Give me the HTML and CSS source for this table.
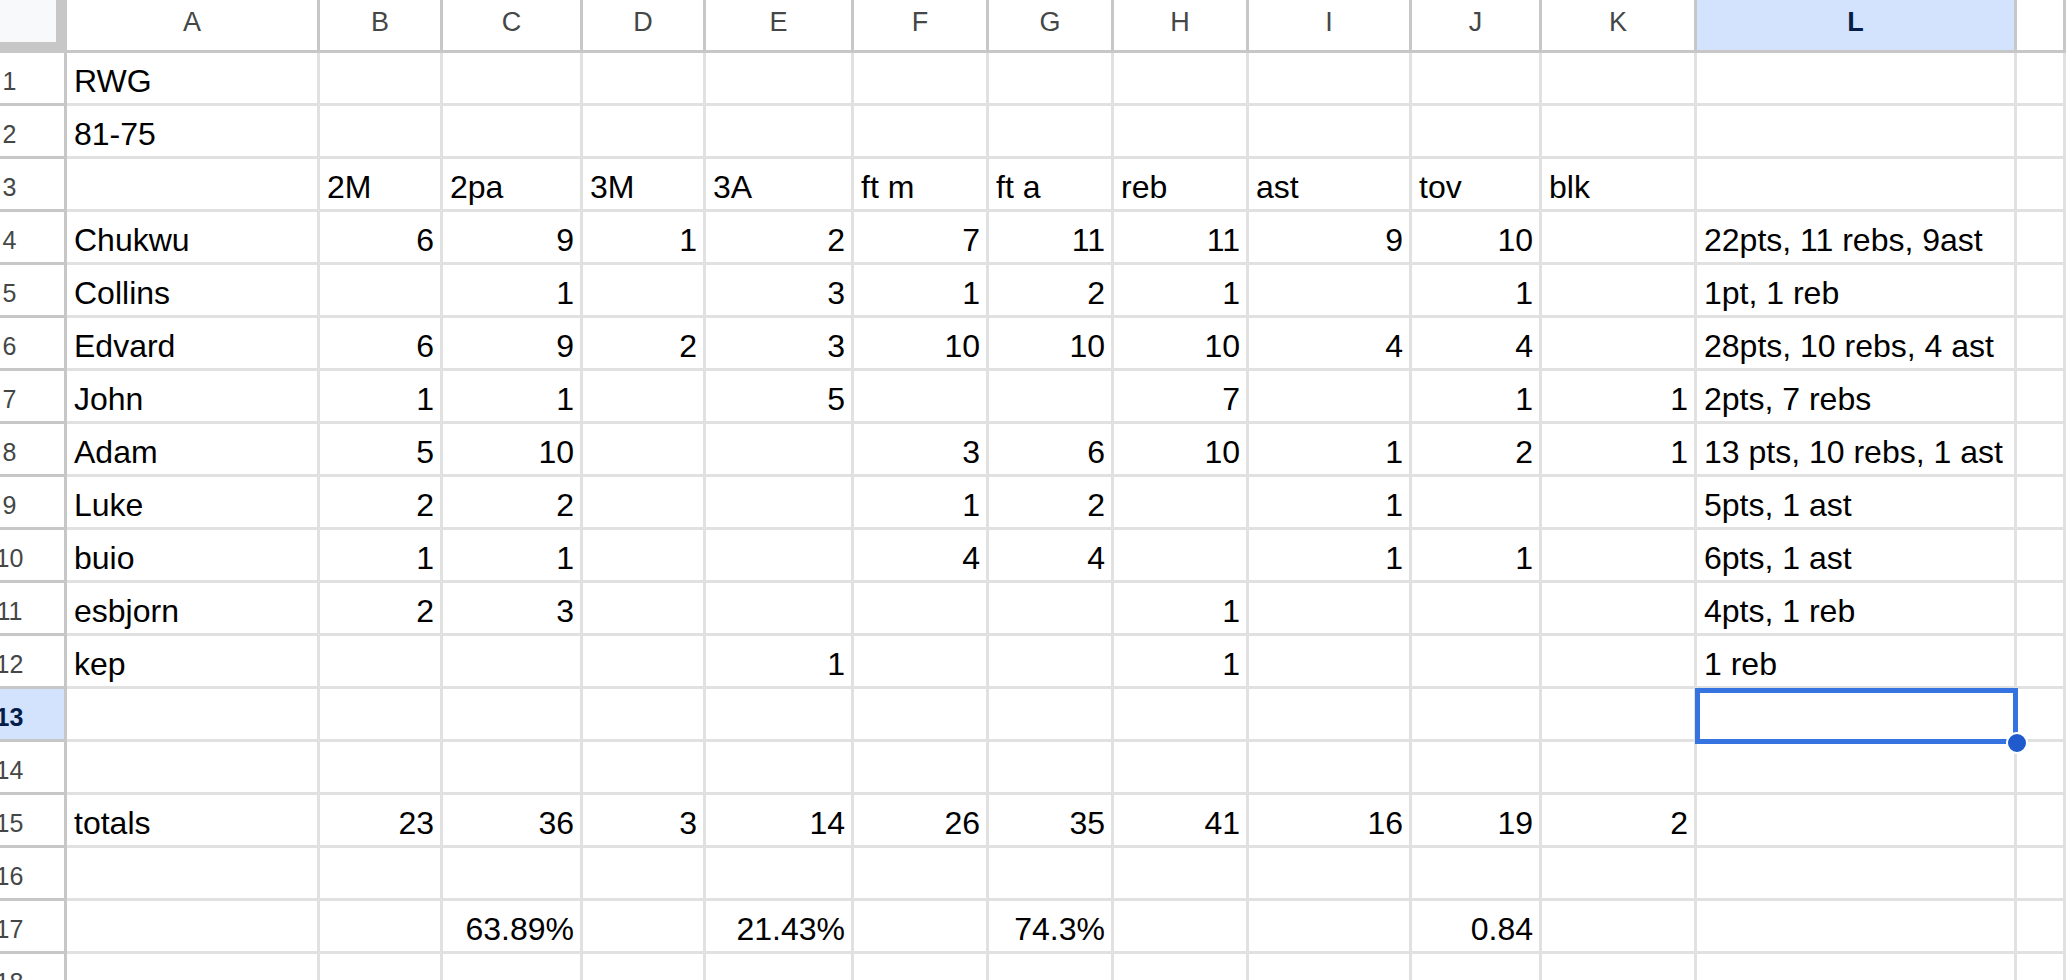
FILE: index.html
```html
<!DOCTYPE html>
<html>
<head>
<meta charset="utf-8">
<title>Sheet</title>
<link rel="stylesheet" href="styles.css">
</head>
<body>
<div class="sheet">
  <div class="corner"></div>
  <div class="ch">A</div><div class="ch">B</div><div class="ch">C</div><div class="ch">D</div><div class="ch">E</div><div class="ch">F</div><div class="ch">G</div><div class="ch">H</div><div class="ch">I</div><div class="ch">J</div><div class="ch">K</div><div class="ch active">L</div><div class="ch"></div>

  <div class="rh"><span>1</span></div><div class="c">RWG</div><div class="c"></div><div class="c"></div><div class="c"></div><div class="c"></div><div class="c"></div><div class="c"></div><div class="c"></div><div class="c"></div><div class="c"></div><div class="c"></div><div class="c"></div><div class="c"></div>

  <div class="rh"><span>2</span></div><div class="c">81-75</div><div class="c"></div><div class="c"></div><div class="c"></div><div class="c"></div><div class="c"></div><div class="c"></div><div class="c"></div><div class="c"></div><div class="c"></div><div class="c"></div><div class="c"></div><div class="c"></div>

  <div class="rh"><span>3</span></div><div class="c"></div><div class="c">2M</div><div class="c">2pa</div><div class="c">3M</div><div class="c">3A</div><div class="c">ft m</div><div class="c">ft a</div><div class="c">reb</div><div class="c">ast</div><div class="c">tov</div><div class="c">blk</div><div class="c"></div><div class="c"></div>

  <div class="rh"><span>4</span></div><div class="c">Chukwu</div><div class="c n">6</div><div class="c n">9</div><div class="c n">1</div><div class="c n">2</div><div class="c n">7</div><div class="c n">11</div><div class="c n">11</div><div class="c n">9</div><div class="c n">10</div><div class="c"></div><div class="c">22pts, 11 rebs, 9ast</div><div class="c"></div>

  <div class="rh"><span>5</span></div><div class="c">Collins</div><div class="c"></div><div class="c n">1</div><div class="c"></div><div class="c n">3</div><div class="c n">1</div><div class="c n">2</div><div class="c n">1</div><div class="c"></div><div class="c n">1</div><div class="c"></div><div class="c">1pt, 1 reb</div><div class="c"></div>

  <div class="rh"><span>6</span></div><div class="c">Edvard</div><div class="c n">6</div><div class="c n">9</div><div class="c n">2</div><div class="c n">3</div><div class="c n">10</div><div class="c n">10</div><div class="c n">10</div><div class="c n">4</div><div class="c n">4</div><div class="c"></div><div class="c">28pts, 10 rebs, 4 ast</div><div class="c"></div>

  <div class="rh"><span>7</span></div><div class="c">John</div><div class="c n">1</div><div class="c n">1</div><div class="c"></div><div class="c n">5</div><div class="c"></div><div class="c"></div><div class="c n">7</div><div class="c"></div><div class="c n">1</div><div class="c n">1</div><div class="c">2pts, 7 rebs</div><div class="c"></div>

  <div class="rh"><span>8</span></div><div class="c">Adam</div><div class="c n">5</div><div class="c n">10</div><div class="c"></div><div class="c"></div><div class="c n">3</div><div class="c n">6</div><div class="c n">10</div><div class="c n">1</div><div class="c n">2</div><div class="c n">1</div><div class="c">13 pts, 10 rebs, 1 ast</div><div class="c"></div>

  <div class="rh"><span>9</span></div><div class="c">Luke</div><div class="c n">2</div><div class="c n">2</div><div class="c"></div><div class="c"></div><div class="c n">1</div><div class="c n">2</div><div class="c"></div><div class="c n">1</div><div class="c"></div><div class="c"></div><div class="c">5pts, 1 ast</div><div class="c"></div>

  <div class="rh"><span>10</span></div><div class="c">buio</div><div class="c n">1</div><div class="c n">1</div><div class="c"></div><div class="c"></div><div class="c n">4</div><div class="c n">4</div><div class="c"></div><div class="c n">1</div><div class="c n">1</div><div class="c"></div><div class="c">6pts, 1 ast</div><div class="c"></div>

  <div class="rh"><span>11</span></div><div class="c">esbjorn</div><div class="c n">2</div><div class="c n">3</div><div class="c"></div><div class="c"></div><div class="c"></div><div class="c"></div><div class="c n">1</div><div class="c"></div><div class="c"></div><div class="c"></div><div class="c">4pts, 1 reb</div><div class="c"></div>

  <div class="rh"><span>12</span></div><div class="c">kep</div><div class="c"></div><div class="c"></div><div class="c"></div><div class="c n">1</div><div class="c"></div><div class="c"></div><div class="c n">1</div><div class="c"></div><div class="c"></div><div class="c"></div><div class="c">1 reb</div><div class="c"></div>

  <div class="rh active"><span>13</span></div><div class="c"></div><div class="c"></div><div class="c"></div><div class="c"></div><div class="c"></div><div class="c"></div><div class="c"></div><div class="c"></div><div class="c"></div><div class="c"></div><div class="c"></div><div class="c selcell"><div class="sel"></div><div class="handle"></div></div><div class="c"></div>

  <div class="rh"><span>14</span></div><div class="c"></div><div class="c"></div><div class="c"></div><div class="c"></div><div class="c"></div><div class="c"></div><div class="c"></div><div class="c"></div><div class="c"></div><div class="c"></div><div class="c"></div><div class="c"></div><div class="c"></div>

  <div class="rh"><span>15</span></div><div class="c">totals</div><div class="c n">23</div><div class="c n">36</div><div class="c n">3</div><div class="c n">14</div><div class="c n">26</div><div class="c n">35</div><div class="c n">41</div><div class="c n">16</div><div class="c n">19</div><div class="c n">2</div><div class="c"></div><div class="c"></div>

  <div class="rh"><span>16</span></div><div class="c"></div><div class="c"></div><div class="c"></div><div class="c"></div><div class="c"></div><div class="c"></div><div class="c"></div><div class="c"></div><div class="c"></div><div class="c"></div><div class="c"></div><div class="c"></div><div class="c"></div>

  <div class="rh"><span>17</span></div><div class="c"></div><div class="c"></div><div class="c n">63.89%</div><div class="c"></div><div class="c n">21.43%</div><div class="c"></div><div class="c n">74.3%</div><div class="c"></div><div class="c"></div><div class="c n">0.84</div><div class="c"></div><div class="c"></div><div class="c"></div>

  <div class="rh"><span>18</span></div><div class="c"></div><div class="c"></div><div class="c"></div><div class="c"></div><div class="c"></div><div class="c"></div><div class="c"></div><div class="c"></div><div class="c"></div><div class="c"></div><div class="c"></div><div class="c"></div><div class="c"></div>
</div>
</body>
</html>
```
FILE: styles.css
```css
html, body {
  margin: 0;
  padding: 0;
  background: #ffffff;
  overflow: hidden;
}
body {
  width: 2066px;
  height: 980px;
  font-family: "Liberation Sans", Arial, sans-serif;
}
.sheet {
  display: grid;
  grid-template-columns: 67px 253px 123px 140px 123px 148px 135px 125px 135px 163px 130px 155px 320px 1fr;
  grid-auto-rows: 53px;
}
.corner {
  box-sizing: border-box;
  background: #f8f9fa;
  border-right: 11px solid #c7c7c7;
  border-bottom: 11px solid #c7c7c7;
}
.ch {
  box-sizing: border-box;
  border-right: 3px solid #c7c7c7;
  border-bottom: 3px solid #c7c7c7;
  display: flex;
  align-items: center;
  justify-content: center;
  font-size: 27px;
  line-height: 1.15;
  color: #444746;
  padding-bottom: 4px;
}
.rh {
  box-sizing: border-box;
  border-right: 3px solid #c7c7c7;
  border-bottom: 3px solid #c7c7c7;
  display: flex;
  align-items: center;
  font-size: 25px;
  line-height: 1.15;
  color: #444746;
  padding-top: 7px;
}
.rh span {
  flex: 0 0 115px;
  margin-left: -48px;
  text-align: center;
}
.active {
  background: #d3e3fd;
  color: #041e49;
  font-weight: bold;
}
.c {
  box-sizing: border-box;
  border-right: 3px solid #e1e1e1;
  border-bottom: 3px solid #e1e1e1;
  display: flex;
  align-items: flex-end;
  padding: 0 7px 3px 7px;
  font-size: 32px;
  line-height: 1.15;
  color: #000000;
  white-space: nowrap;
}
.n {
  justify-content: flex-end;
  padding-right: 6px;
}
.selcell {
  position: relative;
}
.sel {
  position: absolute;
  left: -2px;
  top: -1px;
  right: -4px;
  bottom: -5px;
  border: 5px solid #3574e0;
}
.handle {
  position: absolute;
  left: 309px;
  top: 43px;
  width: 18px;
  height: 18px;
  border-radius: 50%;
  background: #1f5bcd;
  border: 2px solid #ffffff;
}
```
